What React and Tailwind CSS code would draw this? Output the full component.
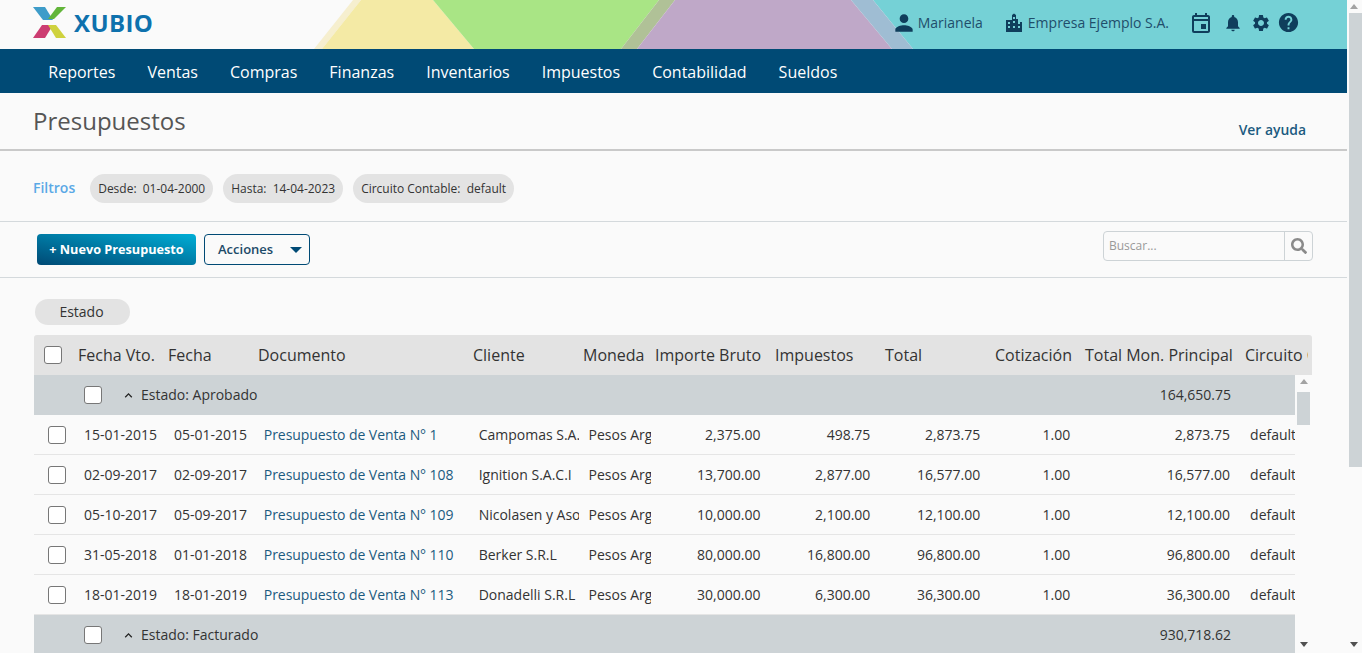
import { MdPerson, MdNotifications, MdSettings, MdHelp, MdOutlineEvent, MdKeyboardArrowUp } from 'react-icons/md';
import { FaSearch } from 'react-icons/fa';

const menu = ['Reportes', 'Ventas', 'Compras', 'Finanzas', 'Inventarios', 'Impuestos', 'Contabilidad', 'Sueldos'];

const aprobados = [
  ['15-01-2015', '05-01-2015', 'Presupuesto de Venta N° 1', 'Campomas S.A.', '2,375.00', '498.75', '2,873.75'],
  ['02-09-2017', '02-09-2017', 'Presupuesto de Venta N° 108', 'Ignition S.A.C.I', '13,700.00', '2,877.00', '16,577.00'],
  ['05-10-2017', '05-09-2017', 'Presupuesto de Venta N° 109', 'Nicolasen y Asociados', '10,000.00', '2,100.00', '12,100.00'],
  ['31-05-2018', '01-01-2018', 'Presupuesto de Venta N° 110', 'Berker S.R.L', '80,000.00', '16,800.00', '96,800.00'],
  ['18-01-2019', '18-01-2019', 'Presupuesto de Venta N° 113', 'Donadelli S.R.L', '30,000.00', '6,300.00', '36,300.00'],
];

const headers = [
  ['Fecha Vto.', 'w-[90px]'],
  ['Fecha', 'w-[90px]'],
  ['Documento', 'w-[215px]'],
  ['Cliente', 'w-[110px]'],
  ['Moneda', 'w-[72px]'],
  ['Importe Bruto', 'w-[120px]'],
  ['Impuestos', 'w-[110px]'],
  ['Total', 'w-[110px]'],
  ['Cotización', 'w-[90px]'],
  ['Total Mon. Principal', 'w-[160px]'],
  ['Circuito Contable', 'w-[73px]'],
];

function Checkbox({ className }) {
  return <span className={`block w-[18px] h-[18px] shrink-0 bg-white border border-[#777] rounded-[3px] ${className}`} />;
}

function Chip({ label, value }) {
  return (
    <span className="h-[29px] flex items-center px-2 rounded-full bg-[#e3e3e3] text-[11.98px] text-[#333] whitespace-pre">
      {label}:  {value}
    </span>
  );
}

function Logo() {
  return (
    <svg width="36" height="34" viewBox="0 0 36 34" className="shrink-0">
      <polygon points="0,1 12,1 20,14 10,14" fill="#3e9cc9" />
      <polygon points="33,1 24,1 15,13 21,13" fill="#62b53a" />
      <polygon points="0,32 12,32 20,19 9,19" fill="#cc3d72" />
      <polygon points="33,32 23,32 15,19 23,19" fill="#cfd23e" />
    </svg>
  );
}

function HeaderShapes() {
  return (
    <svg width="1347" height="49" viewBox="0 0 1347 49" className="absolute inset-0">
      <polygon points="1347,0 873,0 913,49 1347,49" fill="#75d1d6" />
      <polygon points="353,0 361,0 322,49 314,49" fill="#f6efcf" />
      <polygon points="361,0 433,0 474,49 322,49" fill="#f4eaa5" />
      <polygon points="433,0 659,0 621,49 474,49" fill="#a9e585" />
      <polygon points="659,0 675,0 637,49 621,49" fill="#b0c197" />
      <polygon points="675,0 851,0 892,49 637,49" fill="#bfa8c8" />
      <polygon points="851,0 873,0 913,49 892,49" fill="#9fbdd3" />
    </svg>
  );
}

function GroupRow({ label, total }) {
  return (
    <div className="h-10 flex items-center bg-[#cdd3d6] text-[14px] text-[#333]">
      <Checkbox className="ml-[50px]" />
      <MdKeyboardArrowUp className="ml-[19px] text-[#222]" size={15} />
      <span className="ml-[5px] pb-[2px]">{label}</span>
      <span className="ml-auto w-[160px] mr-[54px] pr-[10px] pb-[2px] text-right">{total}</span>
    </div>
  );
}

function Row({ row }) {
  const cell = 'h-full flex items-center overflow-hidden whitespace-nowrap px-[10px]';
  const num = `${cell} justify-end`;
  return (
    <div className="h-10 flex items-center border-b border-[#e5e5e5] text-[14px] text-[#333]">
      <div className="w-10 h-full flex items-center pl-[14px]"><Checkbox /></div>
      <div className={`${cell} w-[90px]`}>{row[0]}</div>
      <div className={`${cell} w-[90px]`}>{row[1]}</div>
      <div className={`${cell} w-[215px] tracking-[-0.07px] text-[#1c5a80]`}>{row[2]}</div>
      <div className={`${cell} w-[110px]`}>{row[3]}</div>
      <div className={`${cell} w-[72px] pr-0`}>Pesos Argentinos</div>
      <div className={`${num} w-[120px]`}>{row[4]}</div>
      <div className={`${num} w-[110px]`}>{row[5]}</div>
      <div className={`${num} w-[110px]`}>{row[6]}</div>
      <div className={`${num} w-[90px]`}>1.00</div>
      <div className={`${num} w-[160px]`}>{row[6]}</div>
      <div className={`${cell} w-[55px] pr-0`}>default</div>
    </div>
  );
}

export default function App() {
  return (
    <div className="h-[653px] overflow-hidden flex bg-[#fafafa] font-['Open_Sans',sans-serif]">
      <div className="w-[1347px] shrink-0">
        <header className="relative h-[49px]">
          <HeaderShapes />
          <div className="relative h-full flex items-center pl-[33px] pr-[47px] pb-[4px] text-[#1f4e6b] text-[14px]">
            <Logo />
            <span className="ml-[5px] text-[24px] leading-none font-bold tracking-[0.4px] text-[#0e71ad]">XUBIO</span>
            <MdPerson size={26} className="ml-auto text-[#0f3e5c]" />
            <span className="ml-[1px]">Marianela</span>
            <svg width="18" height="20" viewBox="1 0 18 20" className="ml-[22px] text-[#0f3e5c]" fill="currentColor">
              <path d="M8 2l2-1.5L12 2v4h2v3h4v10H2V7h6zM4 9v2h2V9zm0 4v2h2v-2zm5-9v2h2V4zm0 4v2h2V8zm0 5v2h2v-2zm5-4v2h2V9zm0 4v2h2v-2z" fillRule="evenodd" />
            </svg>
            <span className="ml-[5px]">Empresa Ejemplo S.A.</span>
            <MdOutlineEvent size={24} className="ml-[20px] text-[#0f3e5c]" />
            <MdNotifications size={20} className="ml-[10px] text-[#0f3e5c]" />
            <MdSettings size={20} className="ml-[8px] text-[#0f3e5c]" />
            <MdHelp size={23} className="ml-[6px] text-[#0f3e5c]" />
          </div>
        </header>

        <nav className="h-11 bg-[#004a75] flex items-center pl-[32.3px] pt-[2px] text-white text-[16px]">
          {menu.map((item) => (
            <span key={item} className="px-4">{item}</span>
          ))}
        </nav>

        <div className="h-[58px] flex justify-between border-b-2 border-[#c9c9c9] pl-[33px] pr-[41px]">
          <h1 className="mt-[11px] text-[24px] leading-[33px] text-[#555]">Presupuestos</h1>
          <a className="mt-[27px] text-[13.9px] font-semibold leading-[19px] text-[#1c5a80]">Ver ayuda</a>
        </div>

        <div className="h-[71px] flex items-center pl-[33px] pt-[5px] gap-[10px] border-b border-[#d4d9dc]">
          <span className="text-[14px] font-semibold text-[#5aa9e6] mr-[5px] pb-[2px]">Filtros</span>
          <Chip label="Desde" value="01-04-2000" />
          <Chip label="Hasta" value="14-04-2023" />
          <Chip label="Circuito Contable" value="default" />
        </div>

        <div className="h-14 flex items-center pl-[37px] pr-[34px] border-b border-[#d4d9dc]">
          <button className="w-[159px] h-[31px] rounded-[4px] text-[12.7px] font-bold text-white bg-gradient-to-tr from-[#004a75] to-[#00aed6]">
            + Nuevo Presupuesto
          </button>
          <button className="ml-2 w-[106px] h-[31px] flex items-center pl-[13px] rounded-[4px] border border-[#004a75] text-[13px] font-semibold text-[#1c4a68]">
            Acciones
            <span className="ml-[17px] w-0 h-0 border-x-[6px] border-x-transparent border-t-[6px] border-t-[#004a75]" />
          </button>
          <div className="ml-auto mb-[7px] w-[210px] h-[30px] flex border border-[#cdd3d6] rounded-[4px]">
            <span className="flex-1 flex items-center pl-[5px] text-[12px] text-[#999]">Buscar...</span>
            <span className="w-7 flex items-center justify-center border-l border-[#cdd3d6] text-[#8a8a8a]">
              <FaSearch size={16} />
            </span>
          </div>
        </div>

        <div className="pl-[34px] pr-[35px] pt-[21px]">
          <span className="ml-px w-[95px] h-[26px] flex items-center justify-center pr-[2px] pb-[2px] rounded-full bg-[#e3e3e3] text-[14px] text-[#333]">Estado</span>

          <div className="mt-[10px]">
            <div className="h-10 flex items-center overflow-hidden rounded-t-[3px] bg-[#e3e3e3] text-[16px] text-[#333] whitespace-nowrap">
              <div className="w-[34px] shrink-0 pl-[10px]"><Checkbox /></div>
              {headers.map(([title, width]) => (
                <div key={title} className={`${width} shrink-0 overflow-hidden pl-[10px]`}>{title}</div>
              ))}
            </div>

            <div className="flex h-[278px]">
              <div className="w-[1261px] shrink-0">
                <GroupRow label="Estado: Aprobado" total="164,650.75" />
                {aprobados.map((row) => (
                  <Row key={row[2]} row={row} />
                ))}
                <GroupRow label="Estado: Facturado" total="930,718.62" />
              </div>
              {/* scrollbar de la grilla */}
              <div className="w-[17px] shrink-0 flex flex-col items-center">
                <span className="mt-[4px] w-0 h-0 border-x-[4px] border-x-transparent border-b-[5px] border-b-[#a3a3a3]" />
                <span className="mt-[8px] w-[13px] h-[33px] bg-[#cdd3d6]" />
                <span className="mt-auto mb-[6px] w-0 h-0 border-x-[4px] border-x-transparent border-t-[5px] border-t-[#505050]" />
              </div>
            </div>
          </div>
        </div>
      </div>

      {/* scrollbar de la pagina */}
      <div className="w-[15px] flex flex-col items-end">
        <span className="mt-[4px] mr-[4px] w-0 h-0 border-x-[4px] border-x-transparent border-b-[5px] border-b-[#a3a3a3]" />
        <span className="mt-[4px] w-[13px] h-[454px] bg-[#cdd3d6]" />
        <span className="mt-auto mb-[6px] mr-[4px] w-0 h-0 border-x-[4px] border-x-transparent border-t-[5px] border-t-[#505050]" />
      </div>
    </div>
  );
}
